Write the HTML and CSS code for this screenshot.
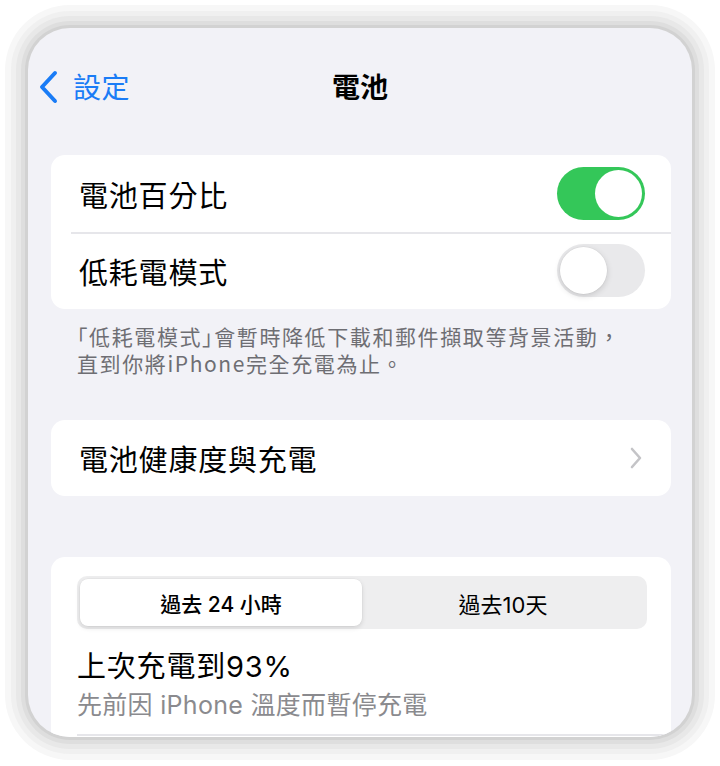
FILE: index.html
```html
<!DOCTYPE html>
<html lang="zh-Hant">
<head>
<meta charset="utf-8">
<title>電池</title>
<link rel="stylesheet" href="styles.css">
</head>
<body>
<div class="device">
  <div class="screen">
    <header class="nav">
      <a class="back">
        <svg class="back-icon" width="22" height="34" viewBox="0 0 22 34"><path d="M18 3 L5 17 L18 31" fill="none" stroke="#1a7cf6" stroke-width="4" stroke-linecap="round" stroke-linejoin="round"/></svg>
        <span>設定</span>
      </a>
      <h1 class="title">電池</h1>
    </header>

    <section class="card">
      <div class="row">
        <span class="label">電池百分比</span>
        <span class="toggle on"><span class="knob"></span></span>
      </div>
      <div class="row">
        <span class="label">低耗電模式</span>
        <span class="toggle"><span class="knob"></span></span>
      </div>
    </section>
    <div class="footer">
      <p class="fline"><span class="half">「</span>低耗電模式<span class="half">」</span>會暫時降低下載和郵件擷取等背景活動，</p>
      <p class="fline">直到你將iPhone完全充電為止。</p>
    </div>

    <section class="card card-link">
      <div class="row">
        <span class="label">電池健康度與充電</span>
        <svg class="chev" width="14" height="22" viewBox="0 0 14 22"><path d="M3 2 L11 11 L3 20" fill="none" stroke="#c4c4c7" stroke-width="2.6" stroke-linecap="round" stroke-linejoin="round"/></svg>
      </div>
    </section>

    <section class="card card-usage">
      <div class="segmented">
        <div class="seg active">過去 24 小時</div>
        <div class="seg">過去10天</div>
      </div>
      <div class="charged">上次充電到93%</div>
      <div class="paused">先前因 iPhone 溫度而暫停充電</div>
      <div class="divider"></div>
    </section>
  </div>
</div>
</body>
</html>
```

FILE: styles.css
```css
* { box-sizing: border-box; }
html, body { margin: 0; padding: 0; background: #ffffff; }
body {
  font-family: "Inter", "Noto Sans CJK TC", sans-serif;
  color: #000;
  width: 720px;
  height: 766px;
  overflow: hidden;
}
.device {
  margin: 28px 28px 0 28px;
  width: 664px;
  height: 709px;
  border-radius: 42px;
  box-shadow:
    0 0 0 3px #d2d2d2,
    0 0 0 7px #dedede,
    0 0 0 12px #e8e8e8,
    0 0 0 17px #f0f0f0,
    0 0 0 23px #f7f7f7;
  background: #f2f2f7;
  overflow: hidden;
}
.screen {
  display: flex;
  flex-direction: column;
  height: 100%;
}
.nav {
  position: relative;
  height: 36px;
  margin-top: 40px;
  display: flex;
  align-items: center;
  justify-content: center;
}
.back {
  position: absolute;
  left: 9px;
  top: 0;
  height: 36px;
  display: flex;
  align-items: center;
  gap: 14px;
  color: #1a7cf6;
  font-size: 28px;
  letter-spacing: 0.5px;
  font-family: "Noto Sans CJK TC", sans-serif;
}
.back-icon { display: block; margin-top: 1px; }
.title {
  margin: 0;
  font-size: 28px;
  font-weight: 700;
  font-family: "Noto Sans CJK TC", sans-serif;
  line-height: 36px;
}
.card {
  margin: 0 21px 0 23px;
  background: #fff;
  border-radius: 14px;
}
.card:first-of-type { margin-top: 51px; }
.row {
  height: 77px;
  display: flex;
  align-items: center;
  justify-content: space-between;
  padding: 0 26px 0 28px;
  position: relative;
}
.row + .row::before {
  content: "";
  position: absolute;
  left: 20px;
  right: 0;
  top: 0;
  height: 1.5px;
  background: #e6e6ea;
}
.label {
  font-size: 29px;
  letter-spacing: 0.8px;
  font-family: "Noto Sans CJK TC", sans-serif;
}
.toggle {
  width: 88px;
  height: 53px;
  border-radius: 27px;
  background: #e9e9eb;
  display: flex;
  align-items: center;
  padding: 0 3px;
}
.toggle.on { background: #34c759; justify-content: flex-end; }
.knob {
  width: 47px;
  height: 47px;
  border-radius: 50%;
  background: #fff;
  box-shadow: 0 2px 6px rgba(0,0,0,0.15), 0 0 0 0.5px rgba(0,0,0,0.05);
}
.toggle.on .knob { box-shadow: none; }
.footer {
  margin: 14px 16px 0 49px;
  display: flex;
  flex-direction: column;
  gap: 1px;
  color: #6e6e73;
  font-family: "Noto Sans CJK TC", sans-serif;
}
.fline {
  margin: 0;
  font-size: 21px;
  letter-spacing: 1.6px;
  line-height: 26px;
  height: 26px;
  white-space: nowrap;
}
.half { font-feature-settings: "halt"; }
.card-link { margin-top: 44px; }
.card-link .row { height: 76px; padding-right: 28px; }
.chev { display: block; }
.card-usage {
  margin-top: 61px;
  padding: 19px 24px 0 26px;
  flex: 1;
  border-radius: 14px 14px 0 0;
}
.segmented {
  height: 53px;
  background: #eeeeef;
  border-radius: 10px;
  padding: 3px;
  display: grid;
  grid-template-columns: 1fr 1fr;
  font-size: 21px;
}
.seg {
  display: flex;
  align-items: center;
  justify-content: center;
  border-radius: 8px;
}
.seg:last-child { font-size: 22px; }
.seg.active {
  background: #fff;
  box-shadow: 0 2px 5px rgba(0,0,0,0.12), 0 0 0 0.5px rgba(0,0,0,0.04);
  font-weight: 500;
}
.charged {
  margin-top: 20px;
  font-size: 29px;
  letter-spacing: 0.8px;
  line-height: 36px;
}
.paused {
  margin-top: 4px;
  font-size: 25px;
  letter-spacing: 0.3px;
  line-height: 32px;
  color: #8a8a8e;
}
.divider {
  margin-top: 13px;
  height: 1.5px;
  background: #e6e6ea;
  margin-right: -24px;
}
```
